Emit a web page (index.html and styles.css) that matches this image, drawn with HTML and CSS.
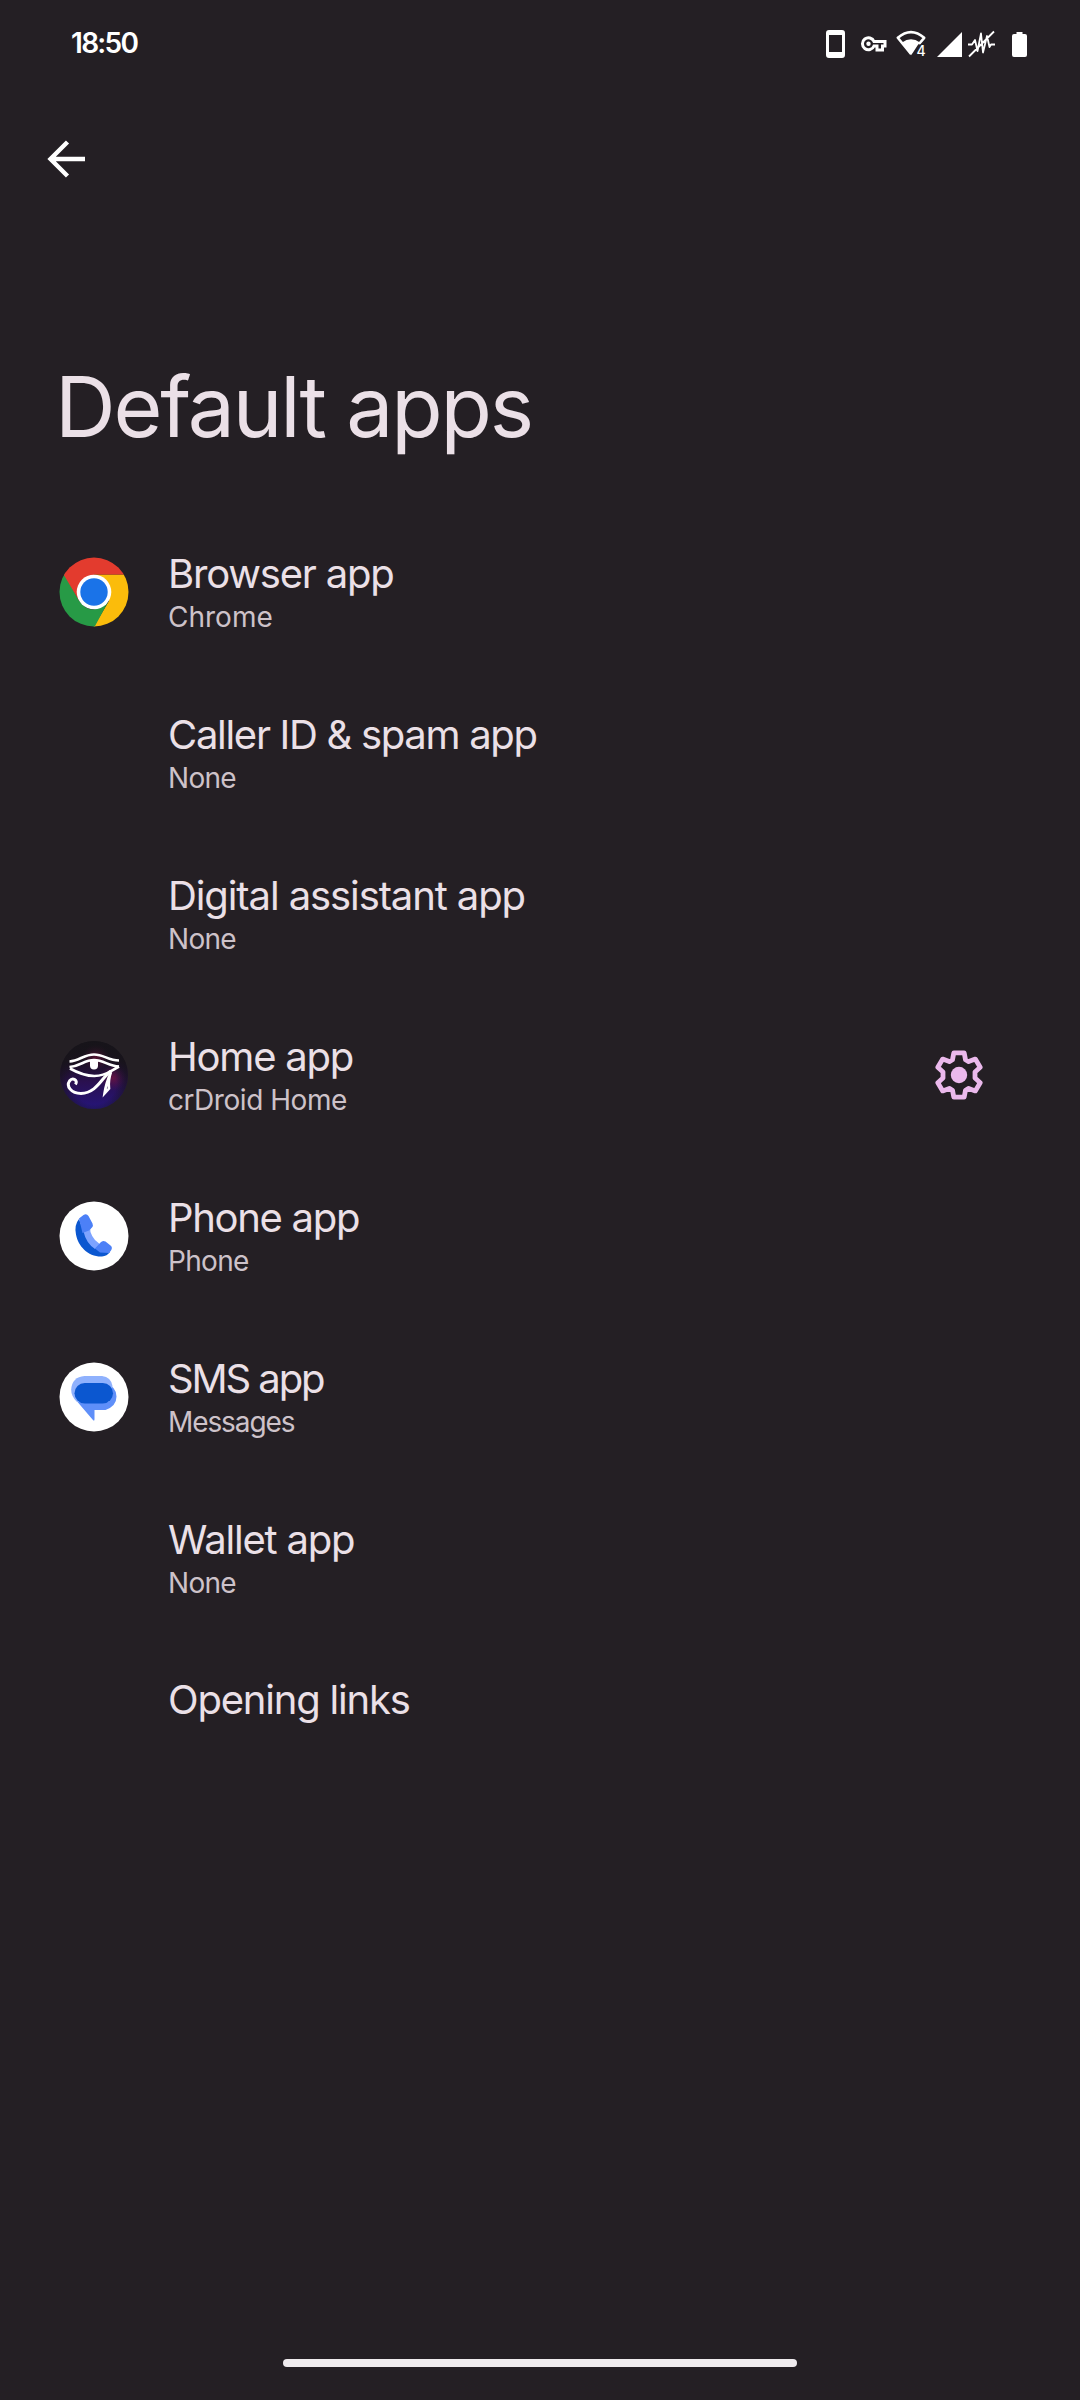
FILE: index.html
```html
<!DOCTYPE html>
<html lang="en">
<head>
<meta charset="utf-8">
<title>Default apps</title>
<link rel="stylesheet" href="styles.css">
</head>
<body>
<div class="screen">
  <header class="status">
    <span class="clock">18:50</span>
    <div class="status-icons">
      <svg class="i-phone" width="20" height="28" viewBox="0 0 20 28"><path fill="#fff" fill-rule="evenodd" d="M3 0h13a3 3 0 0 1 3 3v22a3 3 0 0 1-3 3H3a3 3 0 0 1-3-3V3a3 3 0 0 1 3-3zM3 5v17h13V5z"/></svg>
      <svg class="i-key" width="26" height="16" viewBox="0 0 26 16"><path fill="none" stroke="#fff" stroke-width="3" d="M13 5.500a6 6 0 1 0 0 4.500h3V14h5.500V10h2.500V5.500z"/><circle cx="7.500" cy="7.800" r="2.200" fill="#fff"/></svg>
      <svg class="i-wifi" width="31" height="28" viewBox="0 0 31 28"><path fill="none" stroke="#fff" stroke-width="2.600" stroke-linejoin="round" d="M15 24L1.800 7.800Q15-3.500 28.200 7.800L23 14"/><path fill="#fff" d="M6 12.500q9-6.500 18 0l-2.500 3-4.500 7-2 2.800z"/><text x="20.500" y="25.500" class="wifi-num">4</text></svg>
      <svg class="i-signal" width="25" height="25" viewBox="0 0 25 25"><path fill="#fff" d="M25 0v25H0z"/></svg>
      <svg class="i-wave" width="28" height="28" viewBox="0 0 28 28"><path fill="none" stroke="#fff" stroke-width="1.800" stroke-linejoin="round" d="M0 14.500h4L7 10l2.500 11L13 3.500l2 19L19 6l2.500 11 1.500-2.500h4M1 26.500L26 1.500"/></svg>
      <svg class="i-battery" width="15" height="25" viewBox="0 0 15 25"><path fill="#fff" d="M4.500 0h6v2H13q2 0 2 2v19q0 2-2 2H2q-2 0-2-2V4q0-2 2-2h2.500z"/></svg>
    </div>
  </header>
  <nav class="toolbar">
    <svg width="40" height="40" viewBox="0 0 40 40"><path fill="none" stroke="#fff" stroke-width="4.400" d="M39 20H5M21.500 3L4.500 20 21.500 37"/></svg>
  </nav>
  <h1 class="heading">Default apps</h1>
  <main class="list">
    <section class="row">
      <div class="icon"><svg width="70" height="70" viewBox="0 0 70 70">
        <defs><clipPath id="disc"><circle cx="35" cy="35" r="34.500"/></clipPath></defs>
        <g clip-path="url(#disc)">
          <path fill="#fbbc0b" d="M35 17.500H70V70H34.500L50 44z"/>
          <path fill="#279a46" d="M0 0L6 18 20 43.500Q26 53 35 52.500L49 45 35.500 70H0z"/>
          <path fill="#e33b2e" d="M5 18.200L20 43.500 35 35V17.500H70V0H0z"/>
        </g>
        <circle cx="35" cy="35" r="17.300" fill="#fff"/><circle cx="35" cy="35" r="13.700" fill="#1a73e8"/></svg></div>
      <div class="text"><div class="title">Browser app</div><div class="sub sub-chrome">Chrome</div></div>
    </section>
    <section class="row">
      <div class="icon"></div>
      <div class="text"><div class="title title-caller">Caller ID &amp; spam app</div><div class="sub">None</div></div>
    </section>
    <section class="row">
      <div class="icon"></div>
      <div class="text"><div class="title title-assistant">Digital assistant app</div><div class="sub">None</div></div>
    </section>
    <section class="row">
      <div class="icon"><svg width="70" height="70" viewBox="0 0 70 70">
        <defs>
          <linearGradient id="night" x1="0" y1="0" x2="0" y2="1"><stop offset="0" stop-color="#151317"/><stop offset=".3" stop-color="#1b1120"/><stop offset=".6" stop-color="#2a1050"/><stop offset="1" stop-color="#25157a"/></linearGradient>
          <radialGradient id="glow"><stop offset="0" stop-color="#8a1440" stop-opacity=".6"/><stop offset="1" stop-color="#6a1450" stop-opacity="0"/></radialGradient>
          <radialGradient id="shade" cx=".5" cy=".6" r=".55"><stop offset=".6" stop-color="#17141a" stop-opacity="0"/><stop offset="1" stop-color="#17141a" stop-opacity=".85"/></radialGradient>
        </defs>
        <circle cx="35" cy="35" r="34" fill="url(#night)"/>
        <circle cx="37" cy="17" r="13" fill="url(#glow)"/><circle cx="54" cy="38" r="13" fill="url(#glow)"/>
        <circle cx="35" cy="35" r="34" fill="url(#shade)"/>
        <g fill="none" stroke="#fff" stroke-width="2.600">
          <path d="M10.500 21.500C20 21 25 14.500 35 14.500S49 20.500 60 20.500"/>
          <path d="M10.500 27C22 26 25 20 35 20S49 26 60 26.500"/>
          <path d="M11 28.500Q35 42 52 31L60 26.500"/>
          <path stroke-width="3" d="M52 31C43 37 38 53 22 53.500 12 53.500 7 46 10.500 41c3-4 9-1 6 3.500"/>
          <path d="M52 32Q47 43 45.500 53.500L50 48.500Q49 40 52 32"/>
        </g><path fill="#fff" d="M31 20.500h8v5a4 4 0 0 1-8 0z"/></svg></div>
      <div class="text"><div class="title">Home app</div><div class="sub sub-home">crDroid Home</div></div>
      <svg class="gear" width="48" height="50" viewBox="0 0 48 50"><path fill="none" stroke="#ebb9ec" stroke-width="4.800" stroke-linejoin="round" d="M18.800 2.900h10.400l1.300 6.800 3.200 1.900 6.600-2.500 4.900 8.200-5.200 4.800v5.800l5.200 4.800-4.900 8.200-6.600-2.500-3.200 1.900-1.300 6.800H18.800l-1.300-6.800-3.200-1.900-6.600 2.500-4.900-8.200 5.200-4.800v-5.800l-5.200-4.800 4.900-8.200 6.600 2.500 3.200-1.900z"/><circle cx="24" cy="25" r="8.200" fill="#ebb9ec"/></svg>
    </section>
    <section class="row">
      <div class="icon"><svg width="70" height="70" viewBox="0 0 70 70"><circle cx="35" cy="35" r="34.500" fill="#fff"/>
        <path fill="#7da3ff" d="M23 29l9-3q-3 4 4 13l7 6-5 7-12-10z"/>
        <path fill="#0b57d0" d="M20 18Q15 24 17 33.500C19 45 29 56 43 55.500Q48 55 51 51L40 44.500 36 48Q27 42 24.500 30.500z"/>
        <path fill="#4c80f7" d="M20 17.500l4.500-3.500q3-2 5 1l4 7.500q1 2-.5 4L30 29.500l-6.500 2.500zM36 47.500l5.500-6q2-2.500 5-1l5 4q2.500 2 .5 5L50 52l-9-.5z"/></svg></div>
      <div class="text"><div class="title title-phone">Phone app</div><div class="sub">Phone</div></div>
    </section>
    <section class="row">
      <div class="icon"><svg width="70" height="70" viewBox="0 0 70 70"><circle cx="35" cy="35" r="34.500" fill="#fff"/>
        <path fill="#5f8ff9" d="M22 21h25q10.500 4 10.500 13.500T46.500 48H35.500v9q0 3-2 .5L16 37z"/>
        <path fill="#8fb1fd" d="M25.500 14H43Q52 15 53.500 24L50 40H18Q12 34 12.200 27.500 13 15 25.500 14z"/>
        <rect x="15.500" y="21" width="38.500" height="20.500" rx="10.250" fill="#0b57d0"/></svg></div>
      <div class="text"><div class="title title-sms">SMS app</div><div class="sub sub-messages">Messages</div></div>
    </section>
    <section class="row">
      <div class="icon"></div>
      <div class="text"><div class="title">Wallet app</div><div class="sub">None</div></div>
    </section>
    <section class="row short">
      <div class="icon"></div>
      <div class="text"><div class="title">Opening links</div></div>
    </section>
  </main>
  <footer class="gesture"><div class="pill"></div></footer>
</div>
</body>
</html>
```
FILE: styles.css
```css
body { margin: 0; background: #241f24; }
.screen {
  width: 1080px; height: 2400px; box-sizing: border-box;
  display: flex; flex-direction: column;
  background: #241f24; color: #ebe0e7;
  font-family: Inter, sans-serif; overflow: hidden;
}
.status { height: 88px; flex: none; display: flex; justify-content: space-between; padding: 0 53px 0 71px; }
.clock { font-size: 28px; font-weight: 600; line-height: 87px; color: #fff; letter-spacing: -1.7px; }
.status-icons { display: flex; align-items: center; height: 88px; }
.status-icons svg { display: block; flex: none; overflow: visible; }
.i-key { margin-left: 15px; }
.i-wifi { margin-left: 9px; }
.i-signal { margin-left: 10px; }
.i-wave { margin-left: 6px; }
.i-battery { margin-left: 16px; }
.wifi-num { font-size: 14px; font-weight: 500; fill: #fff; stroke: #241f24; stroke-width: 2px; paint-order: stroke; }
.toolbar { height: 142px; flex: none; padding: 51px 0 0 46px; box-sizing: border-box; }
.toolbar svg { display: block; }
.heading { margin: 126px 0 0 55px; height: 155px; flex: none; font-size: 84px; font-weight: 400; line-height: 102px; white-space: nowrap; letter-spacing: -2.2px; }
.list { flex: 1; }
.row { height: 161px; display: flex; align-items: center; padding: 0 97px 0 58.5px; }
.short { height: 121px; }
.icon { width: 70px; height: 70px; margin-right: 39.5px; flex: none; }
.icon svg, .gear { display: block; }
.text { flex: 1; white-space: nowrap; padding-top: 2px; }
.title { font-size: 40px; line-height: 50px; letter-spacing: -1.2px; }
.title-caller, .title-phone { letter-spacing: -1.3px; }
.title-assistant { letter-spacing: -1.1px; }
.title-sms { letter-spacing: -2.1px; }
.sub { font-size: 28px; line-height: 37px; color: #cdc2c9; letter-spacing: -.7px; }
.sub-chrome { letter-spacing: 0; }
.sub-home { letter-spacing: -.45px; }
.sub-messages { letter-spacing: -1.1px; }
.gesture { height: 54px; flex: none; display: flex; justify-content: center; margin-bottom: -13px; }
.pill { width: 480px; height: 8px; border-radius: 4px; background: #efebee; }
.gesture .pill { width: 514px; }
```
